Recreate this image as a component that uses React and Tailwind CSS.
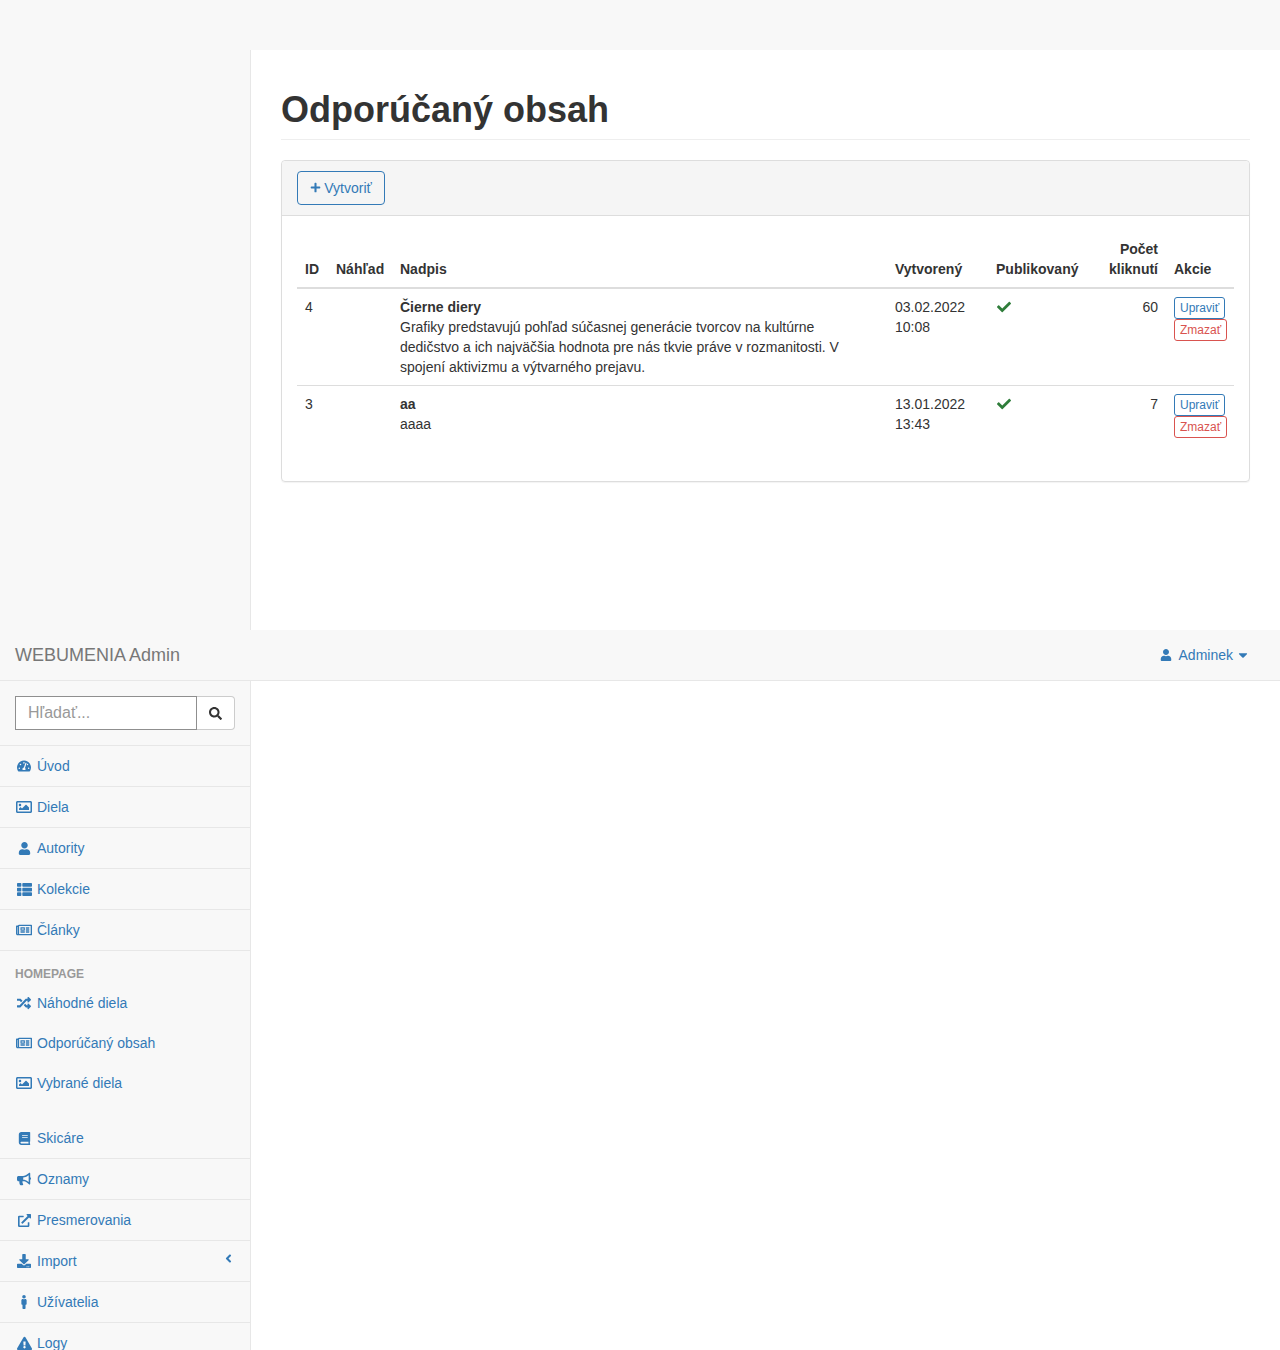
import React from "react";
import {
  FaAngleLeft,
  FaBook,
  FaBullhorn,
  FaCaretDown,
  FaCheck,
  FaDownload,
  FaExclamationTriangle,
  FaExternalLinkAlt,
  FaMale,
  FaPlus,
  FaRandom,
  FaRegImage,
  FaRegNewspaper,
  FaSearch,
  FaTachometerAlt,
  FaThList,
  FaUser,
} from "react-icons/fa";

const rows = [
  {
    id: 4,
    title: "Čierne diery",
    text: "Grafiky predstavujú pohľad súčasnej generácie tvorcov na kultúrne dedičstvo a ich najväčšia hodnota pre nás tkvie práve v rozmanitosti. V spojení aktivizmu a výtvarného prejavu.",
    date: "03.02.2022",
    time: "10:08",
    clicks: 60,
  },
  { id: 3, title: "aa", text: "aaaa", date: "13.01.2022", time: "13:43", clicks: 7 },
];

const NavItem = ({ icon: Icon, label, size = 14, children, className = "" }) => (
  <a className={`flex h-10 items-center px-[15px] text-[#337ab7] ${className}`}>
    <span className="mr-1 flex w-[18px] justify-center">
      <Icon style={{ fontSize: size }} />
    </span>
    {label}
    {children}
  </a>
);

const SmallButton = ({ label, className }) => (
  <a className={`block w-fit rounded-[3px] border px-[5px] py-px text-xs leading-[18px] ${className}`}>{label}</a>
);

const App = () => {
  return (
    <div className="h-[1350px] overflow-hidden bg-white font-['Liberation_Sans',Arial,sans-serif] text-sm leading-5 text-[#333]">
      <div className="h-[50px] bg-[#f8f8f8]" />

      <div className="flex h-[580px]">
        <aside className="w-[251px] border-r border-[#e7e7e7] bg-[#f8f8f8]" />
        <main className="flex-1 px-[30px] pt-10">
          <h1 className="border-b border-[#eee] pb-[9px] text-4xl leading-[39.6px] font-bold">Odporúčaný obsah</h1>

          <section className="mt-5 rounded border border-[#ddd] shadow-[0_1px_1px_rgba(0,0,0,0.05)]">
            <div className="rounded-t border-b border-[#ddd] bg-[#f5f5f5] px-[15px] py-2.5">
              <a className="flex h-[34px] w-[88px] items-center justify-center gap-[3px] rounded border border-[#337ab7] text-[#337ab7]">
                <FaPlus className="text-[11px]" />
                Vytvoriť
              </a>
            </div>
            <div className="p-[15px]">
              <table className="mb-5 w-full table-fixed border-collapse">
                <colgroup>
                  <col className="w-[31px]" />
                  <col className="w-[64px]" />
                  <col className="w-[495px]" />
                  <col className="w-[101px]" />
                  <col className="w-[113px]" />
                  <col className="w-[65px]" />
                  <col className="w-[68px]" />
                </colgroup>
                <thead>
                  <tr className="border-b-2 border-[#ddd] font-bold">
                    <th className="p-2 text-left align-bottom">ID</th>
                    <th className="p-2 text-left align-bottom whitespace-nowrap">Náhľad</th>
                    <th className="p-2 text-left align-bottom">Nadpis</th>
                    <th className="p-2 text-left align-bottom">Vytvorený</th>
                    <th className="p-2 text-left align-bottom">Publikovaný</th>
                    <th className="p-2 text-right align-bottom">Počet kliknutí</th>
                    <th className="p-2 text-left align-bottom">Akcie</th>
                  </tr>
                </thead>
                <tbody>
                  {rows.map((row, i) => (
                    <tr key={row.id} className={i > 0 ? "border-t border-[#ddd]" : ""}>
                      <td className="p-2 align-top">{row.id}</td>
                      <td className="p-2 align-top" />
                      <td className="p-2 align-top">
                        <div className="w-[440px]">
                          <b>{row.title}</b>
                          <br />
                          {row.text}
                        </div>
                      </td>
                      <td className="p-2 align-top">
                        {row.date}
                        <br />
                        {row.time}
                      </td>
                      <td className="p-2 align-top">
                        <FaCheck className="mt-[3px] ml-px text-sm text-[#2f7d3a]" />
                      </td>
                      <td className="p-2 text-right align-top">{row.clicks}</td>
                      <td className="p-2 align-top">
                        <SmallButton label="Upraviť" className="border-[#337ab7] text-[#337ab7]" />
                        <SmallButton label="Zmazať" className="border-[#d9534f] text-[#d9534f]" />
                      </td>
                    </tr>
                  ))}
                </tbody>
              </table>
            </div>
          </section>
        </main>
      </div>

      <nav className="flex h-[51px] items-center justify-between border-b border-[#e7e7e7] bg-[#f8f8f8] pr-[30px] pl-[15px]">
        <span className="text-lg text-[#777]">WEBUMENIA Admin</span>
        <a className="flex items-center text-[#337ab7]">
          <FaUser className="mr-[7px] text-xs" />
          Adminek
          <FaCaretDown className="ml-[3px] text-sm" />
        </a>
      </nav>

      <aside className="h-[669px] w-[251px] border-r border-[#e7e7e7] bg-[#f8f8f8]">
        <div className="flex h-[65px] border-b border-[#e7e7e7] px-[15px] pt-[15px]">
          <input
            placeholder="Hľadať..."
            className="h-[34px] w-[182px] border border-[#8f8f8f] bg-white px-3 text-base placeholder:text-[#999]"
          />
          <button className="flex h-[34px] w-[38px] items-center justify-center rounded-r border border-l-0 border-[#ccc] bg-white text-[#333]">
            <FaSearch className="text-[13px]" />
          </button>
        </div>

        <ul className="divide-y divide-[#e7e7e7] border-b border-[#e7e7e7]">
          <li><NavItem icon={FaTachometerAlt} label="Úvod" /></li>
          <li><NavItem icon={FaRegImage} label="Diela" size={16} /></li>
          <li><NavItem icon={FaUser} label="Autority" size={13} /></li>
          <li><NavItem icon={FaThList} label="Kolekcie" size={15} /></li>
          <li><NavItem icon={FaRegNewspaper} label="Články" size={16} /></li>
        </ul>

        <div className="px-[15px] pt-3.5 text-xs leading-[18px] font-bold text-[#999]">HOMEPAGE</div>
        <NavItem icon={FaRandom} label="Náhodné diela" />
        <NavItem icon={FaRegNewspaper} label="Odporúčaný obsah" size={16} />
        <NavItem icon={FaRegImage} label="Vybrané diela" size={16} />

        <ul className="mt-[15px] divide-y divide-[#e7e7e7]">
          <li><NavItem icon={FaBook} label="Skicáre" size={13} /></li>
          <li><NavItem icon={FaBullhorn} label="Oznamy" /></li>
          <li><NavItem icon={FaExternalLinkAlt} label="Presmerovania" size={13} /></li>
          <li>
            <NavItem icon={FaDownload} label="Import">
              <FaAngleLeft className="mt-[-5px] ml-auto text-[13px]" />
            </NavItem>
          </li>
          <li><NavItem icon={FaMale} label="Užívatelia" /></li>
          <li><NavItem icon={FaExclamationTriangle} label="Logy" size={15} /></li>
        </ul>
      </aside>
    </div>
  );
};

export default App;
